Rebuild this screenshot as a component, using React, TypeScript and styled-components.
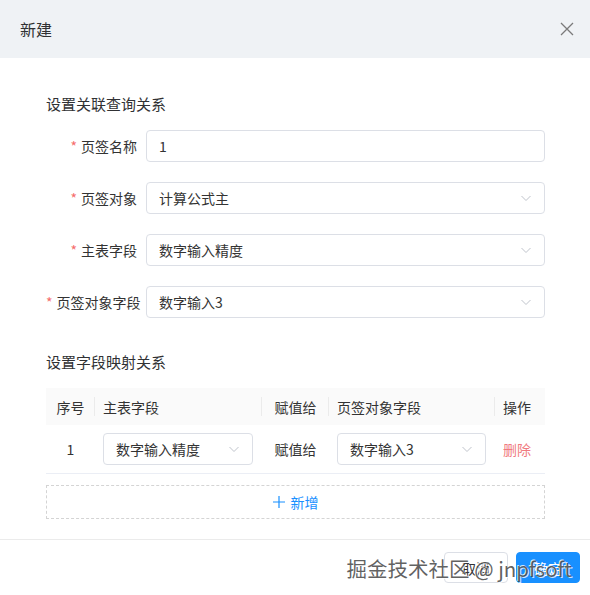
import React from "react";
import styled, { createGlobalStyle } from "styled-components";

const Global = createGlobalStyle`
  html, body { margin: 0; padding: 0; background: #fff; }
  body { font-family: "Noto Sans CJK SC", "Noto Sans", sans-serif; color: #333; }
  * { box-sizing: border-box; }
`;

const Dialog = styled.div`
  position: relative;
  width: 590px;
  height: 595px;
  background: #fff;
  display: flex;
  flex-direction: column;
`;

const Header = styled.div`
  height: 58px;
  background: #eff2f5;
  display: flex;
  align-items: center;
  justify-content: space-between;
  padding: 0 16px 0 20px;
`;

const Title = styled.div`
  font-size: 16px;
  color: #303133;
`;

const Body = styled.div`
  padding: 35px 45px 20px 46px;
  display: flex;
  flex-direction: column;
`;

const SectionTitle = styled.div<{ $top?: number }>`
  font-size: 15px;
  line-height: 22px;
  color: #303133;
  margin-top: ${(p) => p.$top ?? 0}px;
  margin-bottom: 15px;
`;

const FormItem = styled.div`
  display: flex;
  align-items: center;
  height: 32px;
  margin-bottom: 20px;
`;

const Label = styled.label`
  width: 100px;
  padding-right: 9px;
  text-align: right;
  font-size: 14px;
  color: #333;
  white-space: nowrap;
`;

const Star = styled.span`
  color: #f56c6c;
  margin-right: 4px;
`;

const Field = styled.div<{ $w?: number }>`
  flex: ${(p) => (p.$w ? "none" : "1")};
  width: ${(p) => (p.$w ? `${p.$w}px` : "auto")};
  height: 32px;
  border: 1px solid #dcdfe6;
  border-radius: 4px;
  display: flex;
  align-items: center;
  justify-content: space-between;
  padding: 0 12px;
  font-size: 14px;
  color: #333;
  background: #fff;
`;

const Chevron = () => (
  <svg width="12" height="12" viewBox="0 0 12 12" fill="none">
    <path d="M1.5 4 L6 8.5 L10.5 4" stroke="#c0c4cc" strokeWidth="1" />
  </svg>
);

const Table = styled.div`
  display: grid;
  grid-template-columns: 49px 167px 67px 166px 50px;
  width: 499px;
`;

const HeadCell = styled.div<{ $center?: boolean; $sep?: boolean }>`
  height: 37px;
  background: #fafafa;
  display: flex;
  align-items: center;
  justify-content: ${(p) => (p.$center ? "center" : "flex-start")};
  padding: 0 8px;
  font-size: 14px;
  color: #333;
  position: relative;
  &::after {
    content: "";
    display: ${(p) => (p.$sep ? "block" : "none")};
    position: absolute;
    right: 0;
    top: 9px;
    bottom: 9px;
    width: 1px;
    background: #ebebeb;
  }
`;

const Cell = styled.div<{ $center?: boolean; $danger?: boolean }>`
  height: 49px;
  border-bottom: 1px solid #ebeef5;
  display: flex;
  align-items: center;
  justify-content: ${(p) => (p.$center ? "center" : "flex-start")};
  padding: 0 8px;
  font-size: 14px;
  color: ${(p) => (p.$danger ? "#f07a80" : "#333")};
`;

const AddButton = styled.div`
  margin-top: 11px;
  height: 34px;
  border: 1px dashed #d4d4d4;
  display: flex;
  align-items: center;
  justify-content: center;
  gap: 6px;
  color: #1890ff;
  font-size: 14px;
`;

const Footer = styled.div`
  border-top: 1px solid #ebebeb;
  display: flex;
  justify-content: flex-end;
  gap: 8px;
  padding: 12px 10px 0 0;
`;

const Button = styled.div<{ $primary?: boolean }>`
  width: 64px;
  height: 31px;
  border-radius: 4px;
  display: flex;
  align-items: center;
  justify-content: center;
  font-size: 14px;
  border: 1px solid ${(p) => (p.$primary ? "#1890ff" : "#dcdfe6")};
  background: ${(p) => (p.$primary ? "#1890ff" : "#fff")};
  color: ${(p) => (p.$primary ? "#fff" : "#333")};
`;

const Watermark = styled.div`
  position: absolute;
  right: 18px;
  top: 553px;
  font-size: 20.5px;
  color: rgba(70, 70, 70, 0.85);
  font-family: "Noto Sans CJK SC", "Noto Sans", sans-serif;
  text-shadow: 1px 1px 0 rgba(255, 255, 255, 0.8), -1px -1px 0 rgba(255, 255, 255, 0.8);
  white-space: nowrap;
  pointer-events: none;
`;

const Req = ({ children }: { children: React.ReactNode }) => (
  <Label>
    <Star>*</Star>
    {children}
  </Label>
);

export default function App() {
  return (
    <>
      <Global />
      <Dialog>
        <Header>
          <Title>新建</Title>
          <svg width="14" height="14" viewBox="0 0 14 14">
            <path d="M1 1 L13 13 M13 1 L1 13" stroke="#7a7a7a" strokeWidth="1.3" />
          </svg>
        </Header>
        <Body>
          <SectionTitle>设置关联查询关系</SectionTitle>
          <FormItem>
            <Req>页签名称</Req>
            <Field>1</Field>
          </FormItem>
          <FormItem>
            <Req>页签对象</Req>
            <Field>
              计算公式主
              <Chevron />
            </Field>
          </FormItem>
          <FormItem>
            <Req>主表字段</Req>
            <Field>
              数字输入精度
              <Chevron />
            </Field>
          </FormItem>
          <FormItem>
            <Req>页签对象字段</Req>
            <Field>
              数字输入3
              <Chevron />
            </Field>
          </FormItem>
          <SectionTitle $top={13}>设置字段映射关系</SectionTitle>
          <Table>
            <HeadCell $center $sep>序号</HeadCell>
            <HeadCell $sep>主表字段</HeadCell>
            <HeadCell $center $sep>赋值给</HeadCell>
            <HeadCell $sep>页签对象字段</HeadCell>
            <HeadCell>操作</HeadCell>
            <Cell $center>1</Cell>
            <Cell>
              <Field $w={150}>
                数字输入精度
                <Chevron />
              </Field>
            </Cell>
            <Cell $center>赋值给</Cell>
            <Cell>
              <Field $w={149}>
                数字输入3
                <Chevron />
              </Field>
            </Cell>
            <Cell $danger>删除</Cell>
          </Table>
          <AddButton>
            <svg width="12" height="12" viewBox="0 0 12 12">
              <path d="M6 0 V12 M0 6 H12" stroke="#1890ff" strokeWidth="1.2" />
            </svg>
            新增
          </AddButton>
        </Body>
        <Footer>
          <Button>取消</Button>
          <Button $primary>确定</Button>
        </Footer>
        <Watermark>掘金技术社区 @ jnpfsoft</Watermark>
      </Dialog>
    </>
  );
}
